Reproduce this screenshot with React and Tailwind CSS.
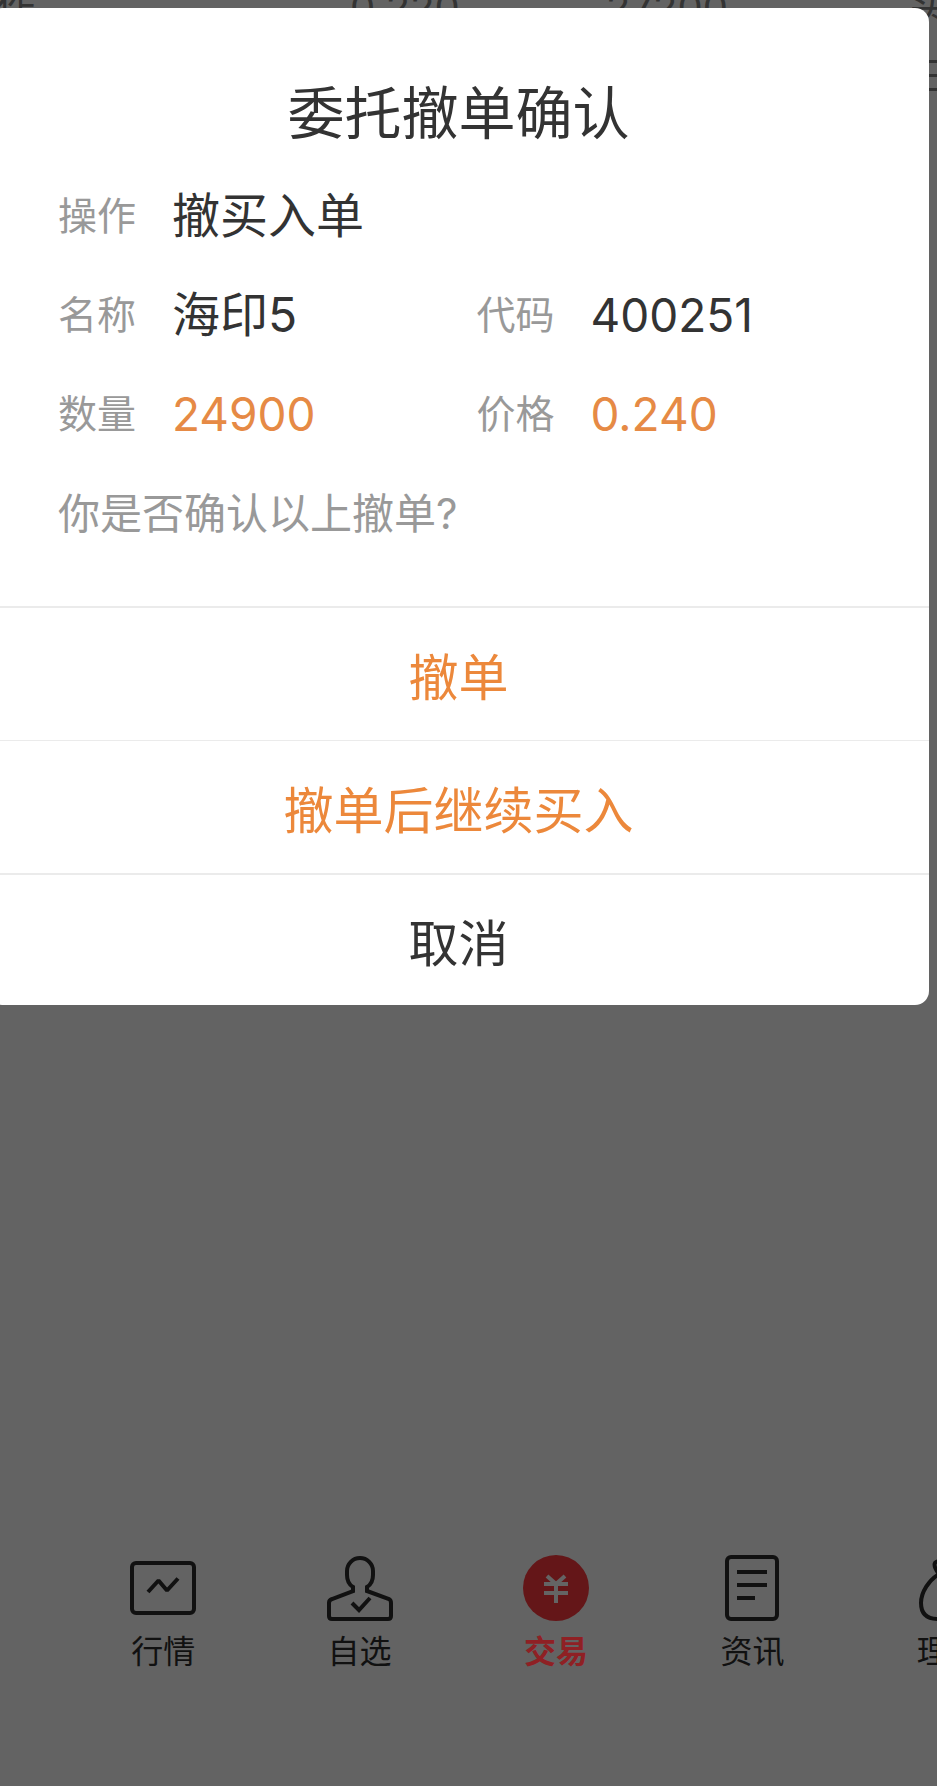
const fields = [
    { label: "操作", value: "撤买入单", wide: true },
    { label: "名称", value: "海印5" },
    { label: "代码", value: "400251", numeric: true },
    { label: "数量", value: "24900", numeric: true, accent: true },
    { label: "价格", value: "0.240", numeric: true, accent: true },
];

const tabs = [
    { label: "行情", icon: QuoteIcon },
    { label: "自选", icon: WatchIcon },
    { label: "交易", icon: TradeIcon, active: true },
    { label: "资讯", icon: NewsIcon },
    { label: "理财", icon: WealthIcon },
];

function QuoteIcon() {
    return (
        <svg className="size-18" viewBox="0 0 72 72" fill="none" stroke="currentColor" strokeWidth="4" aria-hidden="true">
            <rect x="5" y="11" width="62" height="50" rx="4" />
            <path d="M21 40 L31.5 28.5 L40 38.5 L51 26.5" strokeLinejoin="bevel" />
        </svg>
    );
}

function WatchIcon() {
    return (
        <svg className="size-18" viewBox="0 0 72 72" fill="none" stroke="currentColor" strokeWidth="4" aria-hidden="true">
            <path d="M29 39 V35 C24 32 23 28 23 23 V19 A13 13 0 0 1 49 19 V23 C49 28 48 32 43 35 V39 L65 47 Q67 48 67 51 V64 Q67 67 64 67 H8 Q5 67 5 64 V51 Q5 48 8 47 Z" />
            <path d="M28 51 L35 58 L46 46" />
        </svg>
    );
}

function TradeIcon() {
    return (
        <svg className="size-18" viewBox="0 0 72 72" fill="none" aria-hidden="true">
            <circle cx="36" cy="36" r="33" fill="#641618" />
            <path d="M27 24 L36 32 L45 24 M24 32 H48 M24 41 H48 M36 32 V51" stroke="#646464" strokeWidth="4" />
        </svg>
    );
}

function NewsIcon() {
    return (
        <svg className="size-18" viewBox="0 0 72 72" fill="none" stroke="currentColor" strokeWidth="4" aria-hidden="true">
            <rect x="11" y="5" width="50" height="62" rx="4" />
            <path d="M21 20 H51 M21 33 H51 M21 46 H39" />
        </svg>
    );
}

function WealthIcon() {
    return (
        <svg className="size-18" viewBox="0 0 72 72" fill="none" stroke="currentColor" strokeWidth="4" aria-hidden="true">
            <path d="M26 22 C16 28 8 40 8 51 Q8 67 25 67 H47 Q64 67 64 51 C64 40 56 28 46 22 Z" />
            <path d="M26 22 C19 13 21 8 27 10 L36 13 L45 10 C51 8 53 13 46 22" />
            <path d="M27 36 L36 45 L45 36 M27 48 H45 M36 45 V59" />
        </svg>
    );
}

function Field({ label, value, wide, numeric, accent }) {
    return (
        <div className={wide ? "col-span-2 flex items-center" : "flex items-center"}>
            <dt className="w-[114px] text-[39px] text-[#999999]">{label}</dt>
            <dd className={`${numeric ? "text-[46px]" : "text-[48px]"} ${accent ? "text-[#e68a45]" : "text-[#333333]"}`}>
                {value}
            </dd>
        </div>
    );
}

export default function App() {
    return (
        <div className="relative flex min-h-screen flex-col overflow-hidden bg-[#636363] font-[Inter,'Noto_Sans_CJK_SC',sans-serif]">
            {/* order row behind the dialog */}
            <div className="absolute -top-4 -left-1 flex w-full text-[40px] leading-12 text-[#333333]">
                <span className="w-[354px] shrink-0">作</span>
                <span className="w-[256px] shrink-0">0.220</span>
                <span className="w-[304px] shrink-0">27200</span>
                <span className="flex shrink-0 flex-col gap-5">
                    <span>头</span>
                    <span>三</span>
                </span>
            </div>

            <section
                role="dialog"
                aria-labelledby="title"
                className="relative mt-2 mr-2 -ml-3 overflow-hidden rounded-[14px] bg-white"
            >
                <h1 id="title" className="pt-16 text-center text-[57px] leading-21 text-[#333333]">
                    委托撤单确认
                </h1>
                <div className="mt-6 pr-[34px] pb-14 pl-[70px]">
                    <dl className="grid grid-cols-2 gap-y-[27px] leading-18">
                        {fields.map((field) => (
                            <Field key={field.label} {...field} />
                        ))}
                    </dl>
                    <p className="mt-7 text-[42px] leading-18 text-[#999999]">你是否确认以上撤单?</p>
                </div>
                <button className="block h-[134px] w-full border-t-2 border-[#ebebeb] pt-2 text-[50px] text-[#ec883b]">撤单</button>
                <button className="block h-[133px] w-full border-t border-[#ebebeb] pt-2 text-[50px] text-[#ec883b]">撤单后继续买入</button>
                <button className="block h-[132px] w-full border-t-2 border-[#ebebeb] pt-2 text-[50px] text-[#333333]">取消</button>
            </section>

            <nav className="mt-auto ml-[65px] flex w-[982px] pb-[110px]">
                {tabs.map(({ label, icon: Icon, active }) => (
                    <a
                        key={label}
                        href="#"
                        className={
                            active
                                ? "flex flex-1 flex-col items-center gap-1 text-[32px] leading-12 font-bold text-[#8f2024]"
                                : "flex flex-1 flex-col items-center gap-1 text-[32px] leading-12 text-[#111111]"
                        }
                    >
                        <Icon />
                        {label}
                    </a>
                ))}
            </nav>
        </div>
    );
}
